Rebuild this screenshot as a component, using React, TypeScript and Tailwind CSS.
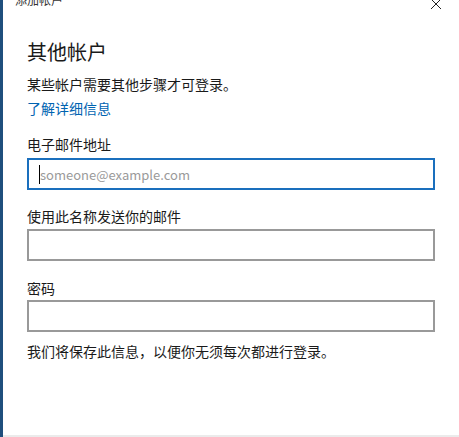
import { useState } from "react"

const font = { fontFamily: '"Noto Sans CJK SC", "Noto Sans", sans-serif' }

function Field({ label, value, onChange, placeholder, focused, type = "text", labelMt, inputMt }: {
  label: string
  value: string
  onChange: (v: string) => void
  placeholder?: string
  focused?: boolean
  type?: string
  labelMt: string
  inputMt: string
}) {
  return (
    <div>
      <label className={`block h-[20px] text-[14px] leading-[20px] text-[#1a1a1a] ${labelMt}`}>{label}</label>
      <div
        className={`${inputMt} flex h-[32px] w-[408px] items-center border-2 bg-white px-[10px] ${
          focused ? "border-[#1a6fbd]" : "border-[#999999]"
        }`}
      >
        {focused && <span className="h-[19px] w-[1px] shrink-0 bg-black" />}
        <input
          type={type}
          value={value}
          onChange={(e) => onChange(e.target.value)}
          placeholder={placeholder}
          className="h-full w-full bg-transparent text-[13px] text-[#1a1a1a] outline-none placeholder:text-[#9a9a9a]"
          style={font}
        />
      </div>
    </div>
  )
}

export default function App() {
  const [email, setEmail] = useState("")
  const [name, setName] = useState("")
  const [password, setPassword] = useState("")

  return (
    <div className="flex h-[437px] w-[459px] overflow-hidden bg-white" style={font}>
      <div className="w-[3px] bg-[#1f4f7d]" />
      <div className="flex flex-1 flex-col">
        <div className="flex-1 overflow-hidden">
          <div className="flex h-[12px] items-start justify-between">
            <span className="-mt-[6px] ml-[12px] text-[12px] leading-[12px] text-[#333333]">添加帐户</span>
            <button className="mr-[17px] -mt-[2px]" aria-label="关闭">
              <svg width="12" height="12" viewBox="0 0 12 12">
                <path d="M1 1 L11 11 M11 1 L1 11" stroke="#222" strokeWidth="1" fill="none" />
              </svg>
            </button>
          </div>

          <div className="pl-[24px]">
            <h1 className="mt-[26px] h-[28px] text-[20px] font-normal leading-[28px] text-[#1a1a1a]">其他帐户</h1>
            <p className="mt-[8px] h-[20px] text-[14px] leading-[20px] text-[#1a1a1a]">某些帐户需要其他步骤才可登录。</p>
            <a href="#" className="mt-[4px] block h-[20px] text-[14px] leading-[20px] text-[#0063b1]">
              了解详细信息
            </a>

            <Field
              label="电子邮件地址"
              value={email}
              onChange={setEmail}
              placeholder="someone@example.com"
              focused
              labelMt="mt-[16px]"
              inputMt="mt-[4px]"
            />
            <Field label="使用此名称发送你的邮件" value={name} onChange={setName} labelMt="mt-[16px]" inputMt="mt-[3px]" />
            <Field label="密码" value={password} onChange={setPassword} type="password" labelMt="mt-[17px]" inputMt="mt-[2px]" />

            <p className="mt-[9px] h-[20px] text-[14px] leading-[20px] text-[#1a1a1a]">
              我们将保存此信息，以便你无须每次都进行登录。
            </p>
          </div>
        </div>
        <div className="h-[2px] bg-[#ebebeb]" />
      </div>
    </div>
  )
}
